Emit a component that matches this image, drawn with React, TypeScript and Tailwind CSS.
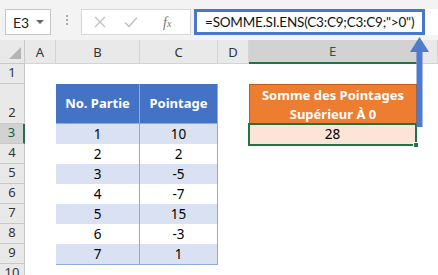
import React from "react";

const cols = [
  { name: "A", w: 31 },
  { name: "B", w: 84 },
  { name: "C", w: 78 },
  { name: "D", w: 31 },
  { name: "E", w: 168 },
  { name: "", w: 21 },
];

const rows = [
  { n: 1, h: 20 },
  { n: 2, h: 40 },
  { n: 3, h: 20 },
  { n: 4, h: 20 },
  { n: 5, h: 20 },
  { n: 6, h: 20 },
  { n: 7, h: 20 },
  { n: 8, h: 20 },
  { n: 9, h: 20 },
  { n: 10, h: 20 },
];

const data = [
  [1, 10],
  [2, 2],
  [3, -5],
  [4, -7],
  [5, 15],
  [6, -3],
  [7, 1],
];

function FormulaBar() {
  return (
    <div className="flex h-[40px] items-start bg-[#f3f3f3] pt-[9px]">
      <div className="ml-[5px] flex h-[26px] w-[46px] items-center justify-between border border-[#c6c6c6] bg-white pl-[7px] pr-[6px] text-[14px] text-[#222]">
        <span>E3</span>
        <span className="h-0 w-0 border-x-[4px] border-t-[4px] border-x-transparent border-t-[#666]"></span>
      </div>
      <div className="ml-[15px] mt-[6px] flex flex-col gap-[2px]">
        <span className="h-[2px] w-[2px] bg-[#a9a9a9]"></span>
        <span className="h-[2px] w-[2px] bg-[#a9a9a9]"></span>
        <span className="h-[2px] w-[2px] bg-[#a9a9a9]"></span>
      </div>
      <div className="ml-[13px] flex h-[26px] w-[110px] items-center border border-[#d8d8d8] bg-white">
        <svg width="12" height="12" viewBox="0 0 12 12" className="ml-[12px]">
          <path d="M1 1L11 11M11 1L1 11" stroke="#c4c4c4" strokeWidth="1.4" />
        </svg>
        <svg width="14" height="12" viewBox="0 0 14 12" className="ml-[18px]">
          <path d="M1 6.5L5 10.5L13 1.5" stroke="#c4c4c4" strokeWidth="1.6" fill="none" />
        </svg>
        <span className="ml-[25px] text-[14px] italic text-[#777] [font-family:'Liberation_Serif',serif]">
          f<span className="text-[10px]">x</span>
        </span>
      </div>
      <div className="ml-[3px] flex h-[26px] flex-1 bg-white">
        <div className="flex h-[26px] w-[231px] items-center border-[3px] border-[#4a78c8] pl-[8px] text-[13.5px] tracking-[-0.2px] text-[#111]">
          =SOMME.SI.ENS(C3:C9;C3:C9;"&gt;0")
        </div>
      </div>
    </div>
  );
}

function Cell({ r, c }: { r: number; c: number }) {
  // r is the row number, c the column index
  if (r === 2 && (c === 1 || c === 2)) {
    return (
      <div className="flex items-center justify-center border-r border-b border-[#8ea9db] bg-[#4472c4] text-[13px] font-bold text-white">
        {c === 1 ? "No. Partie" : "Pointage"}
      </div>
    );
  }
  if (r >= 3 && r <= 9 && (c === 1 || c === 2)) {
    const v = data[r - 3][c - 1];
    return (
      <div
        className={`flex items-center justify-center border-r border-b border-[#8ea9db] text-[13.5px] text-black ${
          r % 2 === 1 ? "bg-[#d9e1f2]" : "bg-white"
        }`}
      >
        {v}
      </div>
    );
  }
  if (r === 2 && c === 4) {
    return (
      <div className="flex flex-col items-center justify-center border border-b-0 border-[#c65911] bg-[#ed7d31] text-[13px] font-bold leading-[19px] text-white">
        <span>Somme des Pointages</span>
        <span>Supérieur À 0</span>
      </div>
    );
  }
  if (r === 3 && c === 4) {
    return (
      <div className="relative -mt-[1px] -ml-[1px] flex h-[23px] items-center justify-center border-2 border-[#217346] bg-[#fce4d6] text-[13.5px] text-black">
        28
        <span className="absolute -right-[4px] -bottom-[4px] h-[6px] w-[6px] border border-white bg-[#217346]"></span>
      </div>
    );
  }
  return <div className={c === 1 && r >= 2 && r <= 9 ? "border-l border-[#8ea9db]" : ""}></div>;
}

export default function App() {
  return (
    <div className="relative h-[275px] w-[438px] overflow-hidden bg-white [font-family:Lato,'Open_Sans',sans-serif]">
      <FormulaBar />
      <div
        className="grid [font-family:'Noto_Sans',sans-serif]"
        style={{
          gridTemplateColumns: `25px ${cols.map((c) => c.w + "px").join(" ")}`,
          gridTemplateRows: `24px ${rows.map((r) => r.h + "px").join(" ")}`,
        }}
      >
        <div className="relative border-r border-b border-[#c8c8c8] bg-[#e9e9e9]">
          <span className="absolute right-[3px] bottom-[4px] h-0 w-0 border-b-[12px] border-l-[12px] border-l-transparent border-b-[#b4b4b4]"></span>
        </div>
        {cols.map((c) =>
          c.name === "E" ? (
            <div
              key={c.name}
              className="flex items-center justify-center border-r border-b-2 border-r-[#c8c8c8] border-b-[#217346] bg-[#d2d2d2] pt-[2px] text-[13px] text-[#1e5c36]"
            >
              {c.name}
            </div>
          ) : (
            <div
              key={c.name || "f"}
              className="flex items-center justify-center border-r border-b border-[#d4d4d4] bg-[#e9e9e9] pt-[2px] text-[13px] text-[#333]"
            >
              {c.name}
            </div>
          )
        )}
        {rows.map((r) => (
          <React.Fragment key={r.n}>
            <div
              className={`flex items-end justify-center border-b pb-[1px] text-[13px] ${
                r.n === 3
                  ? "border-r-2 border-b-[#c8c8c8] border-r-[#217346] bg-[#d2d2d2] text-[#1e5c36]"
                  : "border-r border-[#c8c8c8] bg-[#e9e9e9] text-[#333]"
              }`}
            >
              {r.n}
            </div>
            {cols.map((c, ci) => (
              <div key={ci} className="grid">
                <Cell r={r.n} c={ci} />
              </div>
            ))}
          </React.Fragment>
        ))}
      </div>
      {/* arrow pointing at the formula */}
      <svg className="absolute left-[409px] top-[36px]" width="21" height="92" viewBox="0 0 21 92">
        <path d="M10.5 1L20 16H13.5V91H7.5V16H1Z" fill="#4e7bcb" />
      </svg>
    </div>
  );
}
